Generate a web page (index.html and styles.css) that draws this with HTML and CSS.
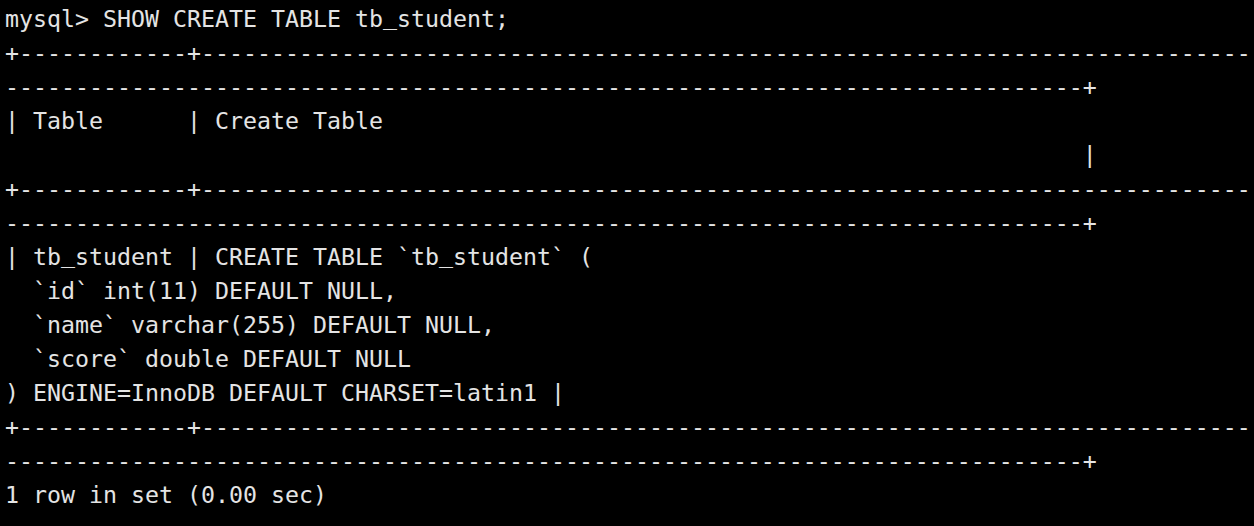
FILE: index.html
```html
<!DOCTYPE html>
<html lang="en">
<head>
<meta charset="utf-8">
<title>mysql</title>
<link rel="stylesheet" href="styles.css">
</head>
<body>
<pre class="terminal">mysql&gt; SHOW CREATE TABLE tb<span class="us">_</span>student;
+------------+---------------------------------------------------------------------------
-----------------------------------------------------------------------------+
| Table      | Create Table                                                              
                                                                             |
+------------+---------------------------------------------------------------------------
-----------------------------------------------------------------------------+
| tb<span class="us">_</span>student | CREATE TABLE `tb<span class="us">_</span>student` (
  `id` int(11) DEFAULT NULL,
  `name` varchar(255) DEFAULT NULL,
  `score` double DEFAULT NULL
) ENGINE=InnoDB DEFAULT CHARSET=latin1 |
+------------+---------------------------------------------------------------------------
-----------------------------------------------------------------------------+
1 row in set (0.00 sec)
</pre>
</body>
</html>
```
FILE: styles.css
```css
html, body {
  margin: 0;
  padding: 0;
  background: #000;
  width: 1254px;
  height: 526px;
  overflow: hidden;
}
.terminal {
  margin: 0;
  padding: 2px 0 0 5px;
  font-family: "DejaVu Sans Mono", "Liberation Mono", monospace;
  font-size: 23.25px;
  line-height: 34px;
  color: #e4e4e4;
  white-space: pre;
  overflow: hidden;
}
.us {
  line-height: 0;
  vertical-align: 3px;
}
```
